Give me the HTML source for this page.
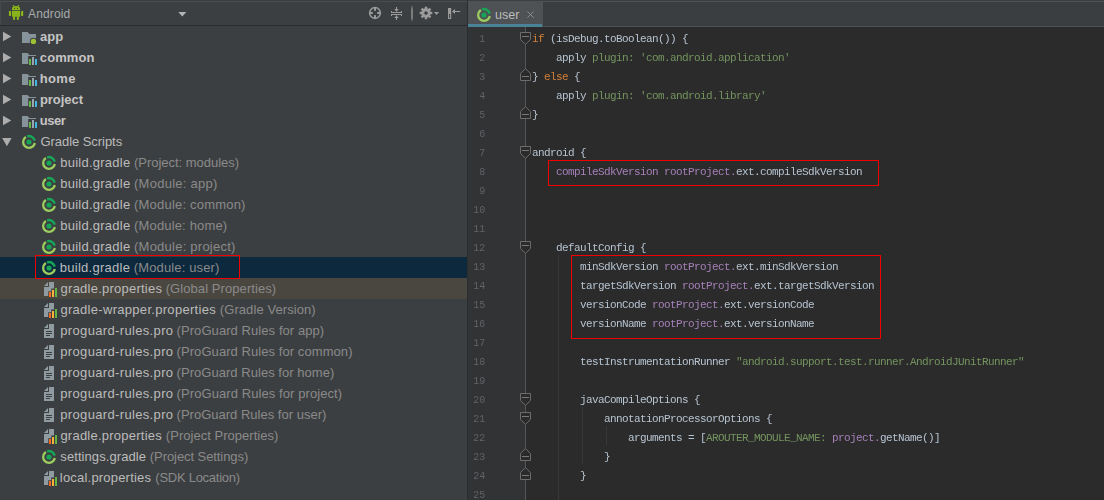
<!DOCTYPE html><html><head><meta charset="utf-8"><title>user</title><style>
*{box-sizing:border-box;margin:0;padding:0}
html,body{width:1104px;height:500px;overflow:hidden;background:#3c3f41}
body{position:relative;font-family:"Liberation Sans",sans-serif;font-size:13px;color:#bbbbbb}
.abs{position:absolute}
#left{position:absolute;left:0;top:0;width:467px;height:500px;background:#3c3f41;overflow:hidden}
#topline{position:absolute;left:0;top:1px;width:1104px;height:1px;background:#4c4c4c}
#tbar{position:absolute;left:0;top:2px;width:467px;height:23px;background:#3b3f41;box-shadow:inset 1px 0 0 #45484a}
#tbar-b{position:absolute;left:0;top:25px;width:467px;height:1px;background:#292b2d}
#tbar .title{position:absolute;left:28px;top:0.5px;height:23px;line-height:23px;font-size:12px;letter-spacing:.15px;color:#a8abad;white-space:pre}
.row{position:absolute;left:0;width:467px;height:21px;white-space:pre}
.row .t{position:absolute;top:0px;height:21px;line-height:21px;font-size:13px;color:#bbbbbb;white-space:pre}
.row .t span{position:absolute;top:0;white-space:pre}
.row .nm{color:#bbbbbb}
.row .bd{font-weight:bold;color:#c4c4c4}
.row .ds{color:#8a8a8a}
.row svg{position:absolute;overflow:visible}
.sel{background:#0d293e}
.hl{background:#4a4740}
.redbox{position:absolute;border:1px solid #f00000}
#split{position:absolute;left:467px;top:0;width:1px;height:500px;background:#2a2c2d}
#right{position:absolute;left:468px;top:0;width:636px;height:500px;background:#2b2b2b;overflow:hidden}
#tabs{position:absolute;left:0;top:0;width:636px;height:27px;background:#3c3f41}
#tabs .bl{position:absolute;left:74px;top:1px;width:563px;height:26px;border:1px solid #4f5152;background:#3b3e40}
#tab{position:absolute;left:0;top:1px;width:74px;height:23px;background:#4e5254}
#tab .u{position:absolute;left:0;top:23px;width:74px;height:3px;background:#4a8397}
#tab .n{position:absolute;left:27px;top:3px;height:23px;line-height:23px;font-size:12.5px;letter-spacing:0;color:#bbbbbb}
#gut{position:absolute;left:0;top:27px;width:57px;height:473px;background:#313335}
#gutl{position:absolute;left:57px;top:27px;width:1px;height:473px;background:#555555}
.ln{position:absolute;left:0;width:17.3px;text-align:right;height:19px;line-height:19px;font-family:"Liberation Mono",monospace;font-size:11.5px;color:#606366;white-space:pre;transform:scaleX(.8696);transform-origin:100% 0}
.cl{position:absolute;left:64px;height:19px;line-height:19px;font-family:"Liberation Mono",monospace;font-size:11px;letter-spacing:-.6px;color:#b6c3d0;white-space:pre}
#code{position:absolute;left:0;top:0;width:636px;height:500px;will-change:transform}
.k{color:#d57f36}.s{color:#74935f}.p{color:#a680b9}
.ig{position:absolute;width:1px;background:#393939}
.fold{position:absolute;overflow:visible}
</style></head><body>
<div id="left">
<div id="tbar">
<svg class="abs" style="left:8px;top:2px" width="16" height="17" viewBox="0 0 16 17"><g fill="#88b31a"><circle cx="5.5" cy="1.7" r="0.8"/><circle cx="10.5" cy="1.7" r="0.8"/><path d="M4 5.9V4.6A4.05 2.7 0 0 1 12.1 4.6V5.9Z"/><path d="M4 6.8H12.1V12.2A0.6 0.6 0 0 1 11.5 12.8H4.6A0.6 0.6 0 0 1 4 12.2Z"/><rect x="0.9" y="6.8" width="2.2" height="5.3" rx="0.9"/><rect x="13" y="6.8" width="2.2" height="5.3" rx="0.9"/><rect x="5.05" y="12" width="2" height="4" rx="0.8"/><rect x="8.85" y="12" width="2" height="4" rx="0.8"/></g><circle cx="6.5" cy="4.5" r="0.55" fill="#3b3f41"/><circle cx="9.5" cy="4.5" r="0.55" fill="#3b3f41"/></svg>
<span class="title">Android</span>
<svg class="abs" style="left:178px;top:10px" width="9" height="5" viewBox="0 0 9 5"><path d="M0.3 0H8.3L4.3 4.4Z" fill="#b4b4b4"/></svg>
<svg class="abs" style="left:368px;top:4px" width="14" height="14" viewBox="-7 -7 14 14"><circle r="5.4" fill="none" stroke="#9b9b9b" stroke-width="1.5"/><g fill="#9b9b9b"><rect x="-1" y="-5.5" width="2" height="3.3"/><rect x="-1" y="2.2" width="2" height="3.3"/><rect x="-5.5" y="-1" width="3.3" height="2"/><rect x="2.2" y="-1" width="3.3" height="2"/></g></svg>
<svg class="abs" style="left:390px;top:4px" width="13" height="15" viewBox="0 0 13 15"><g fill="#9b9b9b"><rect x="1" y="6" width="11" height="1"/><rect x="1" y="8" width="11" height="1"/><rect x="1" y="5" width="1" height="1.5"/><rect x="11" y="5" width="1" height="1.5"/><rect x="1" y="8.5" width="1" height="1.5"/><rect x="11" y="8.5" width="1" height="1.5"/><rect x="6" y="1" width="1" height="4.6"/><rect x="6" y="9.4" width="1" height="4.6"/><path d="M4.2 3H8.8L6.5 5.6Z"/><path d="M4.2 12H8.8L6.5 9.4Z"/></g></svg>
<div class="abs" style="left:411px;top:3px;width:2px;height:17px;background:linear-gradient(#3b3f41,#7c7c7c 25%,#7c7c7c 75%,#3b3f41)"></div>
<svg class="abs" style="left:419px;top:4px" width="14" height="14" viewBox="-7 -7 14 14"><g fill="#9b9b9b"><rect x="-1.25" y="-6.3" width="2.5" height="3" transform="rotate(0)"/><rect x="-1.25" y="-6.3" width="2.5" height="3" transform="rotate(45)"/><rect x="-1.25" y="-6.3" width="2.5" height="3" transform="rotate(90)"/><rect x="-1.25" y="-6.3" width="2.5" height="3" transform="rotate(135)"/><rect x="-1.25" y="-6.3" width="2.5" height="3" transform="rotate(180)"/><rect x="-1.25" y="-6.3" width="2.5" height="3" transform="rotate(225)"/><rect x="-1.25" y="-6.3" width="2.5" height="3" transform="rotate(270)"/><rect x="-1.25" y="-6.3" width="2.5" height="3" transform="rotate(315)"/></g><circle r="3.2" fill="none" stroke="#9b9b9b" stroke-width="3"/></svg>
<svg class="abs" style="left:434px;top:10px" width="5" height="3" viewBox="0 0 5 3"><path d="M0 0H5L2.5 3Z" fill="#9b9b9b"/></svg>
<svg class="abs" style="left:448px;top:6px" width="13" height="11" viewBox="0 0 13 11"><g fill="#9b9b9b"><path d="M0 0H3.2V11H0Z M1.1 6V10H2.1V6Z" fill-rule="evenodd"/><rect x="5" y="3" width="7.2" height="1"/><path d="M4 3.5L7 1V6Z"/></g></svg>
</div><div id="tbar-b"></div>
<div class="row" style="top:26px">
<svg style="left:3px;top:5px" width="9" height="11" viewBox="0 0 9 11"><path d="M0 0.8 L8.3 5.55 L0 10.3Z" fill="#adadad"/></svg>
<svg style="left:22px;top:6px" width="16" height="12" viewBox="0 0 16 12"><path d="M0 0H5.6L7.4 2H14V11H0Z" fill="#87939a"/><circle cx="11.4" cy="9.4" r="3.6" fill="#3c3f41"/><circle cx="11.4" cy="9.4" r="2.7" fill="#9cc336"/></svg>
<span class="t bd" id="t0n" style="left:40.07px;letter-spacing:0.034px">app</span>
</div>
<div class="row" style="top:47px">
<svg style="left:3px;top:5px" width="9" height="11" viewBox="0 0 9 11"><path d="M0 0.8 L8.3 5.55 L0 10.3Z" fill="#adadad"/></svg>
<svg style="left:22px;top:6px" width="16" height="12" viewBox="0 0 16 12"><path d="M0 0H5.6L7.4 2H14V11H0Z" fill="#87939a"/><rect x="6.2" y="3" width="9.4" height="9.2" fill="#3c3f41"/><rect x="7" y="6" width="2" height="6" fill="#62b543"/><rect x="10" y="4" width="2" height="8" fill="#9aa7b0"/><rect x="13" y="6" width="2" height="6" fill="#40b6e0"/></svg>
<span class="t bd" id="t1n" style="left:39.86px;letter-spacing:0.076px">common</span>
</div>
<div class="row" style="top:68px">
<svg style="left:3px;top:5px" width="9" height="11" viewBox="0 0 9 11"><path d="M0 0.8 L8.3 5.55 L0 10.3Z" fill="#adadad"/></svg>
<svg style="left:22px;top:6px" width="16" height="12" viewBox="0 0 16 12"><path d="M0 0H5.6L7.4 2H14V11H0Z" fill="#87939a"/><rect x="6.2" y="3" width="9.4" height="9.2" fill="#3c3f41"/><rect x="7" y="6" width="2" height="6" fill="#62b543"/><rect x="10" y="4" width="2" height="8" fill="#9aa7b0"/><rect x="13" y="6" width="2" height="6" fill="#40b6e0"/></svg>
<span class="t bd" id="t2n" style="left:39.79px;letter-spacing:0.316px">home</span>
</div>
<div class="row" style="top:89px">
<svg style="left:3px;top:5px" width="9" height="11" viewBox="0 0 9 11"><path d="M0 0.8 L8.3 5.55 L0 10.3Z" fill="#adadad"/></svg>
<svg style="left:22px;top:6px" width="16" height="12" viewBox="0 0 16 12"><path d="M0 0H5.6L7.4 2H14V11H0Z" fill="#87939a"/><rect x="6.2" y="3" width="9.4" height="9.2" fill="#3c3f41"/><rect x="7" y="6" width="2" height="6" fill="#62b543"/><rect x="10" y="4" width="2" height="8" fill="#9aa7b0"/><rect x="13" y="6" width="2" height="6" fill="#40b6e0"/></svg>
<span class="t bd" id="t3n" style="left:39.92px;letter-spacing:-0.026px">project</span>
</div>
<div class="row" style="top:110px">
<svg style="left:3px;top:5px" width="9" height="11" viewBox="0 0 9 11"><path d="M0 0.8 L8.3 5.55 L0 10.3Z" fill="#adadad"/></svg>
<svg style="left:22px;top:6px" width="16" height="12" viewBox="0 0 16 12"><path d="M0 0H5.6L7.4 2H14V11H0Z" fill="#87939a"/><rect x="6.2" y="3" width="9.4" height="9.2" fill="#3c3f41"/><rect x="7" y="6" width="2" height="6" fill="#62b543"/><rect x="10" y="4" width="2" height="8" fill="#9aa7b0"/><rect x="13" y="6" width="2" height="6" fill="#40b6e0"/></svg>
<span class="t bd" id="t4n" style="left:39.85px;letter-spacing:-0.493px">user</span>
</div>
<div class="row" style="top:131px">
<svg style="left:2px;top:7px" width="10" height="9" viewBox="0 0 10 9"><path d="M0.2 0 L9.6 0 L4.9 8.3Z" fill="#adadad"/></svg>
<svg style="left:21px;top:3px" width="15" height="15" viewBox="-8 -8 15 15"><circle r="5.85" fill="none" stroke="#9ccd5f" stroke-width="2.3"/><path d="M0 0L-5.2 -8.5L9 -8.5L9 1.6Z" fill="#3c3f41"/><path d="M-1.9 -5.55A5.85 5.85 0 0 1 5.7 -1.35" fill="none" stroke="#17a557" stroke-width="2.5"/><circle r="2.6" fill="#17a557"/></svg>
<span class="t nm" id="t5n" style="left:40.42px;letter-spacing:-0.045px">Gradle Scripts</span>
</div>
<div class="row" style="top:152px">
<svg style="left:41px;top:3px" width="15" height="15" viewBox="-8 -8 15 15"><circle r="5.85" fill="none" stroke="#9ccd5f" stroke-width="2.3"/><path d="M0 0L-5.2 -8.5L9 -8.5L9 1.6Z" fill="#3c3f41"/><path d="M-1.9 -5.55A5.85 5.85 0 0 1 5.7 -1.35" fill="none" stroke="#17a557" stroke-width="2.5"/><circle r="2.6" fill="#17a557"/></svg>
<span class="t nm" id="t6n" style="left:60.30px;letter-spacing:0.241px">build.gradle </span>
<span class="t ds" id="t6d" style="left:134.03px;letter-spacing:-0.027px">(Project: modules)</span>
</div>
<div class="row" style="top:173px">
<svg style="left:41px;top:3px" width="15" height="15" viewBox="-8 -8 15 15"><circle r="5.85" fill="none" stroke="#9ccd5f" stroke-width="2.3"/><path d="M0 0L-5.2 -8.5L9 -8.5L9 1.6Z" fill="#3c3f41"/><path d="M-1.9 -5.55A5.85 5.85 0 0 1 5.7 -1.35" fill="none" stroke="#17a557" stroke-width="2.5"/><circle r="2.6" fill="#17a557"/></svg>
<span class="t nm" id="t7n" style="left:60.30px;letter-spacing:0.241px">build.gradle </span>
<span class="t ds" id="t7d" style="left:134.03px;letter-spacing:0.262px">(Module: app)</span>
</div>
<div class="row" style="top:194px">
<svg style="left:41px;top:3px" width="15" height="15" viewBox="-8 -8 15 15"><circle r="5.85" fill="none" stroke="#9ccd5f" stroke-width="2.3"/><path d="M0 0L-5.2 -8.5L9 -8.5L9 1.6Z" fill="#3c3f41"/><path d="M-1.9 -5.55A5.85 5.85 0 0 1 5.7 -1.35" fill="none" stroke="#17a557" stroke-width="2.5"/><circle r="2.6" fill="#17a557"/></svg>
<span class="t nm" id="t8n" style="left:60.30px;letter-spacing:0.241px">build.gradle </span>
<span class="t ds" id="t8d" style="left:134.03px;letter-spacing:0.204px">(Module: common)</span>
</div>
<div class="row" style="top:215px">
<svg style="left:41px;top:3px" width="15" height="15" viewBox="-8 -8 15 15"><circle r="5.85" fill="none" stroke="#9ccd5f" stroke-width="2.3"/><path d="M0 0L-5.2 -8.5L9 -8.5L9 1.6Z" fill="#3c3f41"/><path d="M-1.9 -5.55A5.85 5.85 0 0 1 5.7 -1.35" fill="none" stroke="#17a557" stroke-width="2.5"/><circle r="2.6" fill="#17a557"/></svg>
<span class="t nm" id="t9n" style="left:60.30px;letter-spacing:0.241px">build.gradle </span>
<span class="t ds" id="t9d" style="left:134.03px;letter-spacing:0.163px">(Module: home)</span>
</div>
<div class="row" style="top:236px">
<svg style="left:41px;top:3px" width="15" height="15" viewBox="-8 -8 15 15"><circle r="5.85" fill="none" stroke="#9ccd5f" stroke-width="2.3"/><path d="M0 0L-5.2 -8.5L9 -8.5L9 1.6Z" fill="#3c3f41"/><path d="M-1.9 -5.55A5.85 5.85 0 0 1 5.7 -1.35" fill="none" stroke="#17a557" stroke-width="2.5"/><circle r="2.6" fill="#17a557"/></svg>
<span class="t nm" id="t10n" style="left:60.30px;letter-spacing:0.241px">build.gradle </span>
<span class="t ds" id="t10d" style="left:134.03px;letter-spacing:0.240px">(Module: project)</span>
</div>
<div class="row sel" style="top:257px">
<svg style="left:41px;top:3px" width="15" height="15" viewBox="-8 -8 15 15"><circle r="5.85" fill="none" stroke="#9ccd5f" stroke-width="2.3"/><path d="M0 0L-5.2 -8.5L9 -8.5L9 1.6Z" fill="#0d293e"/><path d="M-1.9 -5.55A5.85 5.85 0 0 1 5.7 -1.35" fill="none" stroke="#17a557" stroke-width="2.5"/><circle r="2.6" fill="#17a557"/></svg>
<span class="t nm" id="t11n" style="left:59.81px;letter-spacing:0.270px">build.gradle </span>
<span class="t ds" id="t11d" style="left:133.84px;letter-spacing:0.128px">(Module: user)</span>
</div>
<div class="row hl" style="top:278px">
<svg style="left:44px;top:4px" width="14" height="15" viewBox="0 0 14 15"><path d="M0 4L4 0V4Z" fill="#8f9ba1"/><path d="M5 0H10V14H0V5H5Z" fill="#8f9ba1"/><rect x="4.2" y="5" width="10" height="10" fill="#4a4740"/><path d="M5 5H10V6H5Z" fill="#8f9ba1"/><rect x="4.2" y="5.5" width="10" height="10" fill="#4a4740"/><path d="M5 0H10V6.5H7.2V9.3H4.2V14H0V5H5Z" fill="#8f9ba1"/><rect x="5" y="10" width="2" height="5" fill="#f26a22"/><rect x="8" y="8" width="2" height="7" fill="#fbb03b"/><rect x="11" y="6" width="2" height="9" fill="#62b543"/></svg>
<span class="t nm" id="t12n" style="left:60.62px;letter-spacing:0.232px">gradle.properties </span>
<span class="t ds" id="t12d" style="left:165.70px;letter-spacing:0.078px">(Global Properties)</span>
</div>
<div class="row" style="top:299px">
<svg style="left:44px;top:4px" width="14" height="15" viewBox="0 0 14 15"><path d="M0 4L4 0V4Z" fill="#8f9ba1"/><path d="M5 0H10V14H0V5H5Z" fill="#8f9ba1"/><rect x="4.2" y="5" width="10" height="10" fill="#3c3f41"/><path d="M5 5H10V6H5Z" fill="#8f9ba1"/><rect x="4.2" y="5.5" width="10" height="10" fill="#3c3f41"/><path d="M5 0H10V6.5H7.2V9.3H4.2V14H0V5H5Z" fill="#8f9ba1"/><rect x="5" y="10" width="2" height="5" fill="#f26a22"/><rect x="8" y="8" width="2" height="7" fill="#fbb03b"/><rect x="11" y="6" width="2" height="9" fill="#62b543"/></svg>
<span class="t nm" id="t13n" style="left:60.41px;letter-spacing:0.298px">gradle-wrapper.properties </span>
<span class="t ds" id="t13d" style="left:219.81px;letter-spacing:0.080px">(Gradle Version)</span>
</div>
<div class="row" style="top:320px">
<svg style="left:44px;top:4px" width="10" height="14" viewBox="0 0 10 14"><path d="M0 4L4 0V4Z" fill="#8f9ba1"/><path d="M5 0H10V14H0V5H5Z" fill="#8f9ba1"/><rect x="2" y="7" width="6" height="1" fill="#3c3f41"/><rect x="2" y="9" width="6" height="1" fill="#3c3f41"/><rect x="2" y="11" width="4" height="1" fill="#3c3f41"/></svg>
<span class="t nm" id="t14n" style="left:60.30px;letter-spacing:0.341px">proguard-rules.pro </span>
<span class="t ds" id="t14d" style="left:176.57px;letter-spacing:0.073px">(ProGuard Rules for app)</span>
</div>
<div class="row" style="top:341px">
<svg style="left:44px;top:4px" width="10" height="14" viewBox="0 0 10 14"><path d="M0 4L4 0V4Z" fill="#8f9ba1"/><path d="M5 0H10V14H0V5H5Z" fill="#8f9ba1"/><rect x="2" y="7" width="6" height="1" fill="#3c3f41"/><rect x="2" y="9" width="6" height="1" fill="#3c3f41"/><rect x="2" y="11" width="4" height="1" fill="#3c3f41"/></svg>
<span class="t nm" id="t15n" style="left:60.30px;letter-spacing:0.341px">proguard-rules.pro </span>
<span class="t ds" id="t15d" style="left:176.57px;letter-spacing:0.069px">(ProGuard Rules for common)</span>
</div>
<div class="row" style="top:362px">
<svg style="left:44px;top:4px" width="10" height="14" viewBox="0 0 10 14"><path d="M0 4L4 0V4Z" fill="#8f9ba1"/><path d="M5 0H10V14H0V5H5Z" fill="#8f9ba1"/><rect x="2" y="7" width="6" height="1" fill="#3c3f41"/><rect x="2" y="9" width="6" height="1" fill="#3c3f41"/><rect x="2" y="11" width="4" height="1" fill="#3c3f41"/></svg>
<span class="t nm" id="t16n" style="left:60.30px;letter-spacing:0.341px">proguard-rules.pro </span>
<span class="t ds" id="t16d" style="left:176.57px;letter-spacing:0.039px">(ProGuard Rules for home)</span>
</div>
<div class="row" style="top:383px">
<svg style="left:44px;top:4px" width="10" height="14" viewBox="0 0 10 14"><path d="M0 4L4 0V4Z" fill="#8f9ba1"/><path d="M5 0H10V14H0V5H5Z" fill="#8f9ba1"/><rect x="2" y="7" width="6" height="1" fill="#3c3f41"/><rect x="2" y="9" width="6" height="1" fill="#3c3f41"/><rect x="2" y="11" width="4" height="1" fill="#3c3f41"/></svg>
<span class="t nm" id="t17n" style="left:60.30px;letter-spacing:0.341px">proguard-rules.pro </span>
<span class="t ds" id="t17d" style="left:176.57px;letter-spacing:0.084px">(ProGuard Rules for project)</span>
</div>
<div class="row" style="top:404px">
<svg style="left:44px;top:4px" width="10" height="14" viewBox="0 0 10 14"><path d="M0 4L4 0V4Z" fill="#8f9ba1"/><path d="M5 0H10V14H0V5H5Z" fill="#8f9ba1"/><rect x="2" y="7" width="6" height="1" fill="#3c3f41"/><rect x="2" y="9" width="6" height="1" fill="#3c3f41"/><rect x="2" y="11" width="4" height="1" fill="#3c3f41"/></svg>
<span class="t nm" id="t18n" style="left:60.30px;letter-spacing:0.341px">proguard-rules.pro </span>
<span class="t ds" id="t18d" style="left:176.57px;letter-spacing:0.010px">(ProGuard Rules for user)</span>
</div>
<div class="row" style="top:425px">
<svg style="left:44px;top:4px" width="14" height="15" viewBox="0 0 14 15"><path d="M0 4L4 0V4Z" fill="#8f9ba1"/><path d="M5 0H10V14H0V5H5Z" fill="#8f9ba1"/><rect x="4.2" y="5" width="10" height="10" fill="#3c3f41"/><path d="M5 5H10V6H5Z" fill="#8f9ba1"/><rect x="4.2" y="5.5" width="10" height="10" fill="#3c3f41"/><path d="M5 0H10V6.5H7.2V9.3H4.2V14H0V5H5Z" fill="#8f9ba1"/><rect x="5" y="10" width="2" height="5" fill="#f26a22"/><rect x="8" y="8" width="2" height="7" fill="#fbb03b"/><rect x="11" y="6" width="2" height="9" fill="#62b543"/></svg>
<span class="t nm" id="t19n" style="left:60.41px;letter-spacing:0.237px">gradle.properties </span>
<span class="t ds" id="t19d" style="left:165.85px;letter-spacing:0.029px">(Project Properties)</span>
</div>
<div class="row" style="top:446px">
<svg style="left:41px;top:3px" width="15" height="15" viewBox="-8 -8 15 15"><circle r="5.85" fill="none" stroke="#9ccd5f" stroke-width="2.3"/><path d="M0 0L-5.2 -8.5L9 -8.5L9 1.6Z" fill="#3c3f41"/><path d="M-1.9 -5.55A5.85 5.85 0 0 1 5.7 -1.35" fill="none" stroke="#17a557" stroke-width="2.5"/><circle r="2.6" fill="#17a557"/></svg>
<span class="t nm" id="t20n" style="left:60.35px;letter-spacing:0.076px">settings.gradle </span>
<span class="t ds" id="t20d" style="left:149.81px;letter-spacing:-0.073px">(Project Settings)</span>
</div>
<div class="row" style="top:467px">
<svg style="left:44px;top:4px" width="14" height="15" viewBox="0 0 14 15"><path d="M0 4L4 0V4Z" fill="#8f9ba1"/><path d="M5 0H10V14H0V5H5Z" fill="#8f9ba1"/><rect x="4.2" y="5" width="10" height="10" fill="#3c3f41"/><path d="M5 5H10V6H5Z" fill="#8f9ba1"/><rect x="4.2" y="5.5" width="10" height="10" fill="#3c3f41"/><path d="M5 0H10V6.5H7.2V9.3H4.2V14H0V5H5Z" fill="#8f9ba1"/><rect x="5" y="10" width="2" height="5" fill="#f26a22"/><rect x="8" y="8" width="2" height="7" fill="#fbb03b"/><rect x="11" y="6" width="2" height="9" fill="#62b543"/></svg>
<span class="t nm" id="t21n" style="left:59.86px;letter-spacing:0.195px">local.properties </span>
<span class="t ds" id="t21d" style="left:155.33px;letter-spacing:-0.263px">(SDK Location)</span>
</div>
<div class="redbox" style="left:35px;top:255px;width:205px;height:24px"></div>
</div>
<div id="topline"></div>
<div id="split"></div>
<div id="right">
<div id="tabs"><div class="bl"></div><div id="tab"><svg class="abs" style="left:8px;top:6px" width="15" height="15" viewBox="-8 -8 15 15"><circle r="5.85" fill="none" stroke="#9ccd5f" stroke-width="2.3"/><path d="M0 0L-5.2 -8.5L9 -8.5L9 1.6Z" fill="#4e5254"/><path d="M-1.9 -5.55A5.85 5.85 0 0 1 5.7 -1.35" fill="none" stroke="#17a557" stroke-width="2.5"/><circle r="2.6" fill="#17a557"/></svg><span class="n">user</span><svg class="abs" style="left:58.9px;top:9.8px" width="7.2" height="7.2" viewBox="0 0 8 8"><path d="M0.5 0.5L7.5 7.5M7.5 0.5L0.5 7.5" stroke="#8b9092" stroke-width="1.1" fill="none"/></svg><div class="u"></div></div></div>
<div id="gut"></div><div id="gutl"></div>
<div class="ig" style="left:90px;top:255px;height:245px"></div>
<div class="ig" style="left:114px;top:407px;height:57px"></div>
<div class="ig" style="left:138px;top:426px;height:19px"></div>
<div id="code">
<div class="ln" style="top:29px">1</div>
<div class="cl" style="top:30px"><span class="k">if</span> (isDebug.toBoolean()) {</div>
<div class="ln" style="top:48px">2</div>
<div class="cl" style="top:49px">    apply <span class="s">plugin: 'com.android.application'</span></div>
<div class="ln" style="top:67px">3</div>
<div class="cl" style="top:68px">} <span class="k">else</span> {</div>
<div class="ln" style="top:86px">4</div>
<div class="cl" style="top:87px">    apply <span class="s">plugin: 'com.android.library'</span></div>
<div class="ln" style="top:105px">5</div>
<div class="cl" style="top:106px">}</div>
<div class="ln" style="top:124px">6</div>
<div class="ln" style="top:143px">7</div>
<div class="cl" style="top:144px">android {</div>
<div class="ln" style="top:162px">8</div>
<div class="cl" style="top:163px">    <span class="p">compileSdkVersion rootProject.</span>ext.compileSdkVersion</div>
<div class="ln" style="top:181px">9</div>
<div class="ln" style="top:200px">10</div>
<div class="ln" style="top:219px">11</div>
<div class="ln" style="top:238px">12</div>
<div class="cl" style="top:239px">    defaultConfig {</div>
<div class="ln" style="top:257px">13</div>
<div class="cl" style="top:258px">        minSdkVersion <span class="p">rootProject.</span>ext.minSdkVersion</div>
<div class="ln" style="top:276px">14</div>
<div class="cl" style="top:277px">        targetSdkVersion <span class="p">rootProject.</span>ext.targetSdkVersion</div>
<div class="ln" style="top:295px">15</div>
<div class="cl" style="top:296px">        versionCode <span class="p">rootProject.</span>ext.versionCode</div>
<div class="ln" style="top:314px">16</div>
<div class="cl" style="top:315px">        versionName <span class="p">rootProject.</span>ext.versionName</div>
<div class="ln" style="top:333px">17</div>
<div class="ln" style="top:352px">18</div>
<div class="cl" style="top:353px">        testInstrumentationRunner <span class="s">"android.support.test.runner.AndroidJUnitRunner"</span></div>
<div class="ln" style="top:371px">19</div>
<div class="ln" style="top:390px">20</div>
<div class="cl" style="top:391px">        javaCompileOptions {</div>
<div class="ln" style="top:409px">21</div>
<div class="cl" style="top:410px">            annotationProcessorOptions {</div>
<div class="ln" style="top:428px">22</div>
<div class="cl" style="top:429px">                arguments = [<span class="s">AROUTER_MODULE_NAME: </span><span class="p">project.</span>getName()]</div>
<div class="ln" style="top:447px">23</div>
<div class="cl" style="top:448px">            }</div>
<div class="ln" style="top:466px">24</div>
<div class="cl" style="top:467px">        }</div>
<div class="ln" style="top:485px">25</div>
</div>
<svg class="fold" style="left:52px;top:32px" width="11" height="13" viewBox="0 0 11 13"><path d="M0.5 0.5H10.5V7.5L5.5 12.3L0.5 7.5Z" fill="#2b2b2b" stroke="#6c6c6c" stroke-width="1"/><rect x="2" y="4" width="7" height="1" fill="#787878"/></svg>
<svg class="fold" style="left:52px;top:146px" width="11" height="13" viewBox="0 0 11 13"><path d="M0.5 0.5H10.5V7.5L5.5 12.3L0.5 7.5Z" fill="#2b2b2b" stroke="#6c6c6c" stroke-width="1"/><rect x="2" y="4" width="7" height="1" fill="#787878"/></svg>
<svg class="fold" style="left:52px;top:241px" width="11" height="13" viewBox="0 0 11 13"><path d="M0.5 0.5H10.5V7.5L5.5 12.3L0.5 7.5Z" fill="#2b2b2b" stroke="#6c6c6c" stroke-width="1"/><rect x="2" y="4" width="7" height="1" fill="#787878"/></svg>
<svg class="fold" style="left:52px;top:393px" width="11" height="13" viewBox="0 0 11 13"><path d="M0.5 0.5H10.5V7.5L5.5 12.3L0.5 7.5Z" fill="#2b2b2b" stroke="#6c6c6c" stroke-width="1"/><rect x="2" y="4" width="7" height="1" fill="#787878"/></svg>
<svg class="fold" style="left:52px;top:412px" width="11" height="13" viewBox="0 0 11 13"><path d="M0.5 0.5H10.5V7.5L5.5 12.3L0.5 7.5Z" fill="#2b2b2b" stroke="#6c6c6c" stroke-width="1"/><rect x="2" y="4" width="7" height="1" fill="#787878"/></svg>
<svg class="fold" style="left:52px;top:68px" width="11" height="13" viewBox="0 0 11 13"><path d="M0.5 12.5H10.5V5.5L5.5 0.7L0.5 5.5Z" fill="#2b2b2b" stroke="#6c6c6c" stroke-width="1"/><rect x="2" y="8" width="7" height="1" fill="#787878"/></svg>
<svg class="fold" style="left:52px;top:106px" width="11" height="13" viewBox="0 0 11 13"><path d="M0.5 12.5H10.5V5.5L5.5 0.7L0.5 5.5Z" fill="#2b2b2b" stroke="#6c6c6c" stroke-width="1"/><rect x="2" y="8" width="7" height="1" fill="#787878"/></svg>
<svg class="fold" style="left:52px;top:448px" width="11" height="13" viewBox="0 0 11 13"><path d="M0.5 12.5H10.5V5.5L5.5 0.7L0.5 5.5Z" fill="#2b2b2b" stroke="#6c6c6c" stroke-width="1"/><rect x="2" y="8" width="7" height="1" fill="#787878"/></svg>
<svg class="fold" style="left:52px;top:467px" width="11" height="13" viewBox="0 0 11 13"><path d="M0.5 12.5H10.5V5.5L5.5 0.7L0.5 5.5Z" fill="#2b2b2b" stroke="#6c6c6c" stroke-width="1"/><rect x="2" y="8" width="7" height="1" fill="#787878"/></svg>
<div class="redbox" style="left:80px;top:160px;width:331px;height:26px"></div>
<div class="redbox" style="left:103px;top:255px;width:310px;height:84px"></div>
</div>
</body></html>
